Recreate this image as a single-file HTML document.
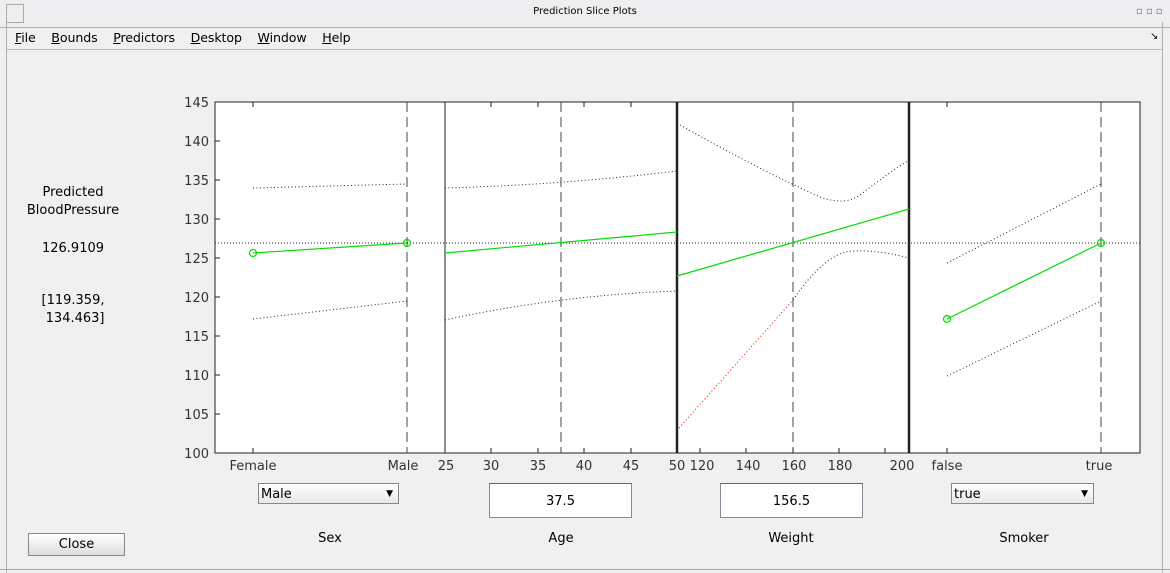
<html><head><style>
body{margin:0;width:1170px;height:573px;background:#f0f0f0;font-family:"DejaVu Sans","Liberation Sans",sans-serif;font-size:13px;color:#000;position:relative;overflow:hidden}
.a{position:absolute}
u{text-decoration:underline}
</style></head><body>
<div class="a" style="left:0;top:0;width:1170px;height:27px;background:#eeeef0;border-bottom:1px solid #b0b0b0"></div>
<div class="a" style="left:6px;top:4px;width:16px;height:17px;border:1px solid #aaa"></div>
<div class="a" style="left:0;top:6px;width:1170px;text-align:center;font-size:10px">Prediction Slice Plots</div>
<div class="a" style="left:1136px;top:6px;font-size:10px;color:#777">▫ ▫ ▫</div>
<div class="a" style="left:6px;top:22px;width:1px;height:551px;background:#b0b0b0"></div>
<div class="a" style="left:1162px;top:22px;width:1px;height:551px;background:#b0b0b0"></div>
<div class="a" style="left:7px;top:49px;width:1155px;height:1px;background:#b8b8b8"></div>
<div class="a" style="left:15px;top:30px;font-size:12.6px;letter-spacing:-0.1px"><u>F</u>ile&nbsp;&nbsp;&nbsp; <u>B</u>ounds&nbsp;&nbsp;&nbsp; <u>P</u>redictors&nbsp;&nbsp;&nbsp; <u>D</u>esktop&nbsp;&nbsp;&nbsp; <u>W</u>indow&nbsp;&nbsp;&nbsp; <u>H</u>elp</div>
<div class="a" style="left:1150px;top:31px;font-size:10px">↘</div>
<div class="a" style="left:0;top:184px;width:146px;text-align:center;line-height:18px">Predicted<br>BloodPressure</div>
<div class="a" style="left:0;top:241px;width:146px;text-align:center">126.9109</div>
<div class="a" style="left:0;top:292px;width:146px;text-align:center;line-height:18px">[119.359,<br>&nbsp;134.463]</div>
<div class="a" style="left:28px;top:533px;width:95px;height:21px;border:1px solid #888;background:linear-gradient(#fff,#ddd);text-align:center;line-height:21px">Close</div>
<svg class="a" style="left:0;top:0" width="1170" height="573" font-family="DejaVu Sans,Liberation Sans,sans-serif" font-size="13" fill="#333">
<rect x="215" y="102" width="925" height="351" fill="#fff" stroke="#222"/>
<g stroke="#222" stroke-width="1">
<line x1="445" y1="102" x2="445" y2="453"/>
<line x1="677" y1="102" x2="677" y2="453" stroke-width="2.5"/>
<line x1="909" y1="102" x2="909" y2="453" stroke-width="2.5"/>
</g>
<g stroke="#333" stroke-dasharray="10,5" stroke-width="0.9">
<line x1="407" y1="102" x2="407" y2="453"/><line x1="561" y1="102" x2="561" y2="453"/>
<line x1="793" y1="102" x2="793" y2="453"/><line x1="1101" y1="102" x2="1101" y2="453"/>
</g>
<line x1="215" y1="243" x2="1140" y2="243" stroke="#222" stroke-dasharray="1,2"/>
<g stroke="#222" stroke-dasharray="1,2.5" fill="none">
<path d="M253 188L407 184M253 319L407 301M445 188Q560 185 677 171M445 320Q560 295 677 291"/>
<path d="M680 125Q760 170 820 197Q845 206 860 195Q890 172 909 160"/>
<path d="M793 300Q820 260 845 252Q870 248 909 258"/>
<path d="M947 263L1101 184M947 376L1101 301"/>
</g>
<path d="M679 428L793 300" stroke="red" stroke-dasharray="1,2.5" fill="none"/>
<g stroke="#0d0" stroke-width="1.2" fill="none">
<path d="M253 253L407 243M445 253L677 232M677 276L909 209M947 319L1101 243"/>
<circle cx="253" cy="253" r="3.5"/><circle cx="407" cy="243" r="3.5"/><circle cx="947" cy="319" r="3.5"/><circle cx="1101" cy="243" r="3.5"/>
</g>
<g stroke="#222">
<path d="M215 141h5M215 180h5M215 219h5M215 258h5M215 297h5M215 336h5M215 375h5M215 414h5"/>
<path d="M253 453v-5M491 453v-5M538 453v-5M584 453v-5M631 453v-5M700 453v-5M746 453v-5M793 453v-5M839 453v-5M885 453v-5M947 453v-5M253 102v5M491 102v5M538 102v5M584 102v5M631 102v5M947 102v5"/>
</g>
<g text-anchor="end">
<text x="209" y="107">145</text><text x="209" y="146">140</text><text x="209" y="185">135</text><text x="209" y="224">130</text><text x="209" y="263">125</text><text x="209" y="302">120</text><text x="209" y="341">115</text><text x="209" y="380">110</text><text x="209" y="419">105</text><text x="209" y="458">100</text>
</g>
<g text-anchor="middle">
<text x="253" y="470">Female</text><text x="403" y="470">Male</text><text x="446" y="470">25</text><text x="491" y="470">30</text><text x="538" y="470">35</text><text x="584" y="470">40</text><text x="631" y="470">45</text><text x="677" y="470">50</text><text x="702" y="470">120</text><text x="748" y="470">140</text><text x="794" y="470">160</text><text x="840" y="470">180</text><text x="902" y="470">200</text><text x="947" y="470">false</text><text x="1099" y="470">true</text>
</g>
<g text-anchor="middle" fill="#000">
<text x="330" y="542">Sex</text><text x="561" y="542">Age</text><text x="791" y="542">Weight</text><text x="1024" y="542">Smoker</text>
</g>
</svg>
<div class="a" style="left:258px;top:483px;width:141px;height:21px;border:1px solid #888;background:linear-gradient(#fff,#e8e8e8);line-height:21px;padding-left:2px;box-sizing:border-box">Male<span style="position:absolute;right:5px;font-size:9px">▼</span></div>
<div class="a" style="left:951px;top:483px;width:143px;height:21px;border:1px solid #888;background:linear-gradient(#fff,#e8e8e8);line-height:21px;padding-left:2px;box-sizing:border-box">true<span style="position:absolute;right:5px;font-size:9px">▼</span></div>
<div class="a" style="left:489px;top:483px;width:143px;height:35px;border:1px solid #889;border-top-color:#666;background:#fff;text-align:center;line-height:35px;box-sizing:border-box">37.5</div>
<div class="a" style="left:720px;top:483px;width:143px;height:35px;border:1px solid #889;border-top-color:#666;background:#fff;text-align:center;line-height:35px;box-sizing:border-box">156.5</div>
<div class="a" style="left:0;top:569px;width:1170px;height:1px;background:#aaa"></div>
</body></html>
